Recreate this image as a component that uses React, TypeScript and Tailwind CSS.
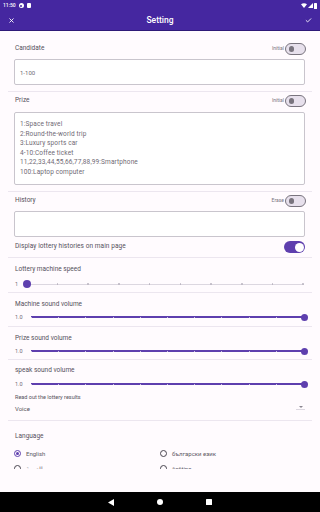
import { X, Check } from "lucide-react";

const font = { fontFamily: "Roboto, 'Noto Sans', sans-serif" };

function Toggle({ label, on = false }: { label?: string; on?: boolean }) {
  return (
    <div className="flex items-center gap-[1px]">
      {label && <span className="text-[5px] text-[#79747e]">{label}</span>}
      {on ? (
        <div className="flex h-[12px] w-[21px] items-center justify-end rounded-full bg-[#5e3fae] pr-[1.5px]">
          <div className="h-[9px] w-[9px] rounded-full bg-white" />
        </div>
      ) : (
        <div className="flex h-[12px] w-[21px] items-center rounded-full border border-[#79747e] bg-[#e7e0ec] pl-[2.5px]">
          <div className="h-[5.5px] w-[5.5px] rounded-full bg-[#79747e]" />
        </div>
      )}
    </div>
  );
}

function Divider() {
  return <div className="h-px bg-[#ece6ef]" />;
}

function SpeedSlider() {
  const ticks = Array.from({ length: 10 }, (_, i) => i);
  return (
    <div className="flex h-[12px] items-center">
      <span className="w-[12px] pl-[1px] text-[5.5px] text-[#6f6a75]">1</span>
      <div className="relative h-[12px] flex-1 mr-[2px]">
        <div className="absolute left-0 right-0 top-[5.5px] h-px bg-[#dcd7e0]" />
        <div className="absolute inset-0 flex items-center justify-between">
          {ticks.map((t) => (
            <div key={t} className="h-[1.5px] w-[1.5px] rounded-full bg-[#b9b3bf]" />
          ))}
        </div>
        <div className="absolute left-[-3.5px] top-[2px] h-[8px] w-[8px] rounded-full bg-[#5e3fae]" />
      </div>
    </div>
  );
}

function VolumeSlider() {
  const ticks = Array.from({ length: 11 }, (_, i) => i);
  return (
    <div className="flex h-[12px] items-center">
      <span className="w-[17px] pl-[1px] text-[5.5px] text-[#6f6a75]">1.0</span>
      <div className="relative h-[12px] flex-1 mr-[2px]">
        <div className="absolute left-0 right-0 top-[5px] h-[2px] bg-[#5e3fae]" />
        <div className="absolute inset-0 flex items-center justify-between">
          {ticks.map((t) => (
            <div key={t} className="h-[1px] w-[1px] bg-[#c9bfe3]" />
          ))}
        </div>
        <div className="absolute right-[-3.5px] top-[2.5px] h-[7px] w-[7px] rounded-full bg-[#5e3fae]" />
      </div>
    </div>
  );
}

function Radio({ label, checked = false }: { label: string; checked?: boolean }) {
  return (
    <div className="flex h-[9px] items-center gap-[5px]">
      <div
        className={`flex h-[7px] w-[7px] items-center justify-center rounded-full border ${
          checked ? "border-[#5e3fae]" : "border-[#49454f]"
        }`}
      >
        {checked && <div className="h-[3.5px] w-[3.5px] rounded-full bg-[#5e3fae]" />}
      </div>
      <span className="text-[6px] text-[#5d5964]">{label}</span>
    </div>
  );
}

export default function App() {
  const prizes = [
    "1:Space travel",
    "2:Round-the-world trip",
    "3:Luxury sports car",
    "4-10:Coffee ticket",
    "11,22,33,44,55,66,77,88,99:Smartphone",
    "100:Laptop computer",
  ];

  return (
    <div className="flex h-[512px] w-[320px] flex-col overflow-hidden bg-[#fffbfe]" style={font}>
      {/* status bar */}
      <div className="flex h-[11px] items-center justify-between bg-[#4527a0] px-[3px] text-white">
        <div className="flex items-center gap-[3px]">
          <span className="text-[5px] font-medium">11:50</span>
          <div className="flex h-[5px] w-[5px] items-center justify-center rounded-full bg-white">
            <div className="h-[2px] w-[2px] rounded-full bg-[#4527a0]" />
          </div>
          <div className="h-[5px] w-[4px] rounded-[1px] bg-white" />
        </div>
        <div className="flex items-center gap-[1px]">
          <svg width="6" height="5" viewBox="0 0 12 10">
            <path d="M0 2.5 Q6 -2 12 2.5 L6 10 Z" fill="white" />
          </svg>
          <svg width="5" height="5" viewBox="0 0 10 10">
            <path d="M10 0 L10 10 L0 10 Z" fill="white" />
          </svg>
          <div className="h-[6px] w-[3px] rounded-[0.5px] bg-white" />
        </div>
      </div>

      {/* app bar */}
      <div className="flex h-[20px] items-center justify-between border-b border-[#2e1a78] bg-[#4527a0] px-[8px] text-white">
        <X size={7} strokeWidth={3} />
        <span className="text-[8.5px] font-medium">Setting</span>
        <Check size={7} strokeWidth={3} />
      </div>

      {/* content */}
      <div className="h-[438px] overflow-hidden px-[8px] text-[#55515c]">
        {/* Candidate */}
        <div className="px-[6px] pt-[12px] pb-[6px]">
          <div className="flex h-[12px] items-center justify-between pl-[1px]">
            <span className="text-[6.5px]">Candidate</span>
            <Toggle label="Initial" />
          </div>
          <div className="mt-[4px] flex h-[26px] items-center rounded-[2px] border border-[#c9c5cd] bg-white px-[5px] mr-[1px]">
            <span className="text-[6px] text-[#6f6a75]">1-100</span>
          </div>
        </div>
        <Divider />

        {/* Prize */}
        <div className="px-[6px] pt-[3px] pb-[6px]">
          <div className="flex h-[12px] items-center justify-between pl-[1px]">
            <span className="text-[6.5px]">Prize</span>
            <Toggle label="Initial" />
          </div>
          <div className="mt-[5px] flex h-[73px] flex-col justify-center rounded-[2px] border border-[#c9c5cd] bg-white px-[5px] mr-[1px]">
            {prizes.map((p) => (
              <div key={p} className="h-[9.5px] text-[6.5px] leading-[9.5px] tracking-[0.02em] text-[#6f6a75]">
                {p}
              </div>
            ))}
          </div>
        </div>
        <Divider />

        {/* History */}
        <div className="px-[6px] pt-[3px] pb-[4px]">
          <div className="flex h-[12px] items-center justify-between pl-[1px]">
            <span className="text-[6.5px]">History</span>
            <Toggle label="Erase" />
          </div>
          <div className="mt-[4px] h-[26px] rounded-[2px] border border-[#c9c5cd] bg-white mr-[1px]" />
          <div className="mt-[4px] flex h-[12px] items-center justify-between pl-[1px] mr-[1px]">
            <span className="text-[6.5px] tracking-[0.01em]">Display lottery histories on main page</span>
            <Toggle on />
          </div>
        </div>
        <Divider />

        {/* Lottery machine speed */}
        <div className="px-[6px] pt-[7px] pb-[2px]">
          <div className="h-[9px] pl-[1px] text-[6.5px] leading-[9px]">Lottery machine speed</div>
          <div className="mt-[4px]">
            <SpeedSlider />
          </div>
        </div>
        <Divider />

        {/* Machine sound volume */}
        <div className="px-[6px] pt-[7px] pb-[3px]">
          <div className="h-[9px] pl-[1px] text-[6.5px] leading-[9px]">Machine sound volume</div>
          <div className="mt-[2px]">
            <VolumeSlider />
          </div>
        </div>
        <Divider />

        {/* Prize sound volume */}
        <div className="px-[6px] pt-[7px] pb-[2px]">
          <div className="h-[9px] pl-[1px] text-[6.5px] leading-[9px]">Prize sound volume</div>
          <div className="mt-[2px]">
            <VolumeSlider />
          </div>
        </div>
        <Divider />

        {/* speak sound volume */}
        <div className="px-[6px] pt-[6px] pb-[7px]">
          <div className="h-[9px] pl-[1px] text-[6.5px] leading-[9px]">speak sound volume</div>
          <div className="mt-[3px]">
            <VolumeSlider />
          </div>
          <div className="mt-[3px] h-[8px] pl-[1px] text-[5.5px] leading-[8px]">Read out the lottery results</div>
          <div className="mt-[2px] flex h-[10px] items-center justify-between pl-[1px] mr-[1px]">
            <span className="text-[6px]">Voice</span>
            <div className="flex w-[9px] flex-col items-center">
              <svg width="4" height="2" viewBox="0 0 4 2">
                <path d="M0 0 L4 0 L2 2 Z" fill="#8a8590" />
              </svg>
              <div className="mt-[1.5px] h-px w-[9px] bg-[#dcd7e0]" />
            </div>
          </div>
        </div>
        <Divider />

        {/* Language */}
        <div className="px-[6px] pt-[11px]">
          <div className="h-[9px] pl-[1px] text-[6.5px] leading-[9px]">Language</div>
          <div className="mt-[8px] grid grid-cols-2 gap-y-[6px]">
            <Radio label="English" checked />
            <Radio label="български език" />
            <Radio label="العربية" />
            <Radio label="čeština" />
          </div>
        </div>
      </div>

      <div className="flex-1 bg-[#fffbfe]" />

      {/* nav bar */}
      <div className="flex h-[20px] items-center justify-center gap-[43px] bg-black">
        <svg width="6" height="7" viewBox="0 0 6 7">
          <path d="M6 0 L6 7 L0 3.5 Z" fill="white" />
        </svg>
        <div className="h-[6px] w-[6px] rounded-full bg-white" />
        <div className="h-[6px] w-[6px] rounded-[0.5px] bg-white" />
      </div>
    </div>
  );
}
